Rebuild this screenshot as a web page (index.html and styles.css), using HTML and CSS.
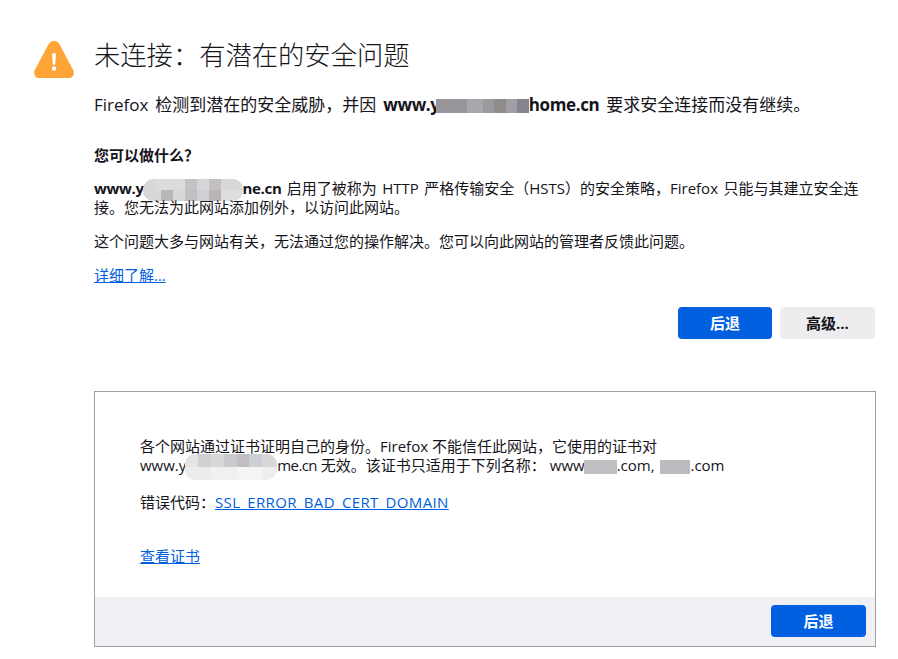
FILE: index.html
```html
<!DOCTYPE html>
<html lang="zh-CN">
<head>
<meta charset="utf-8">
<title>未连接：有潜在的安全问题</title>
<link rel="stylesheet" href="styles.css">
</head>
<body>
<main class="page">
  <svg class="warn" width="40" height="37" viewBox="0 0 40 37" aria-hidden="true">
    <path fill="#ffa436" d="M20 0c2.400 0 4.300 1.200 5.500 3.300l13.700 25.700c1.900 3.700-.5 8-4.700 8H5.500C1.300 37-1.100 32.700.8 29L14.500 3.300C15.700 1.200 17.600 0 20 0z"/>
    <path fill="#fff" d="M18 13.700c0-1.100.9-1.700 2-1.700s2 .6 2 1.700l-.8 9.400c0 .6-.5.900-1.200.9s-1.200-.3-1.200-.9z"/>
    <rect fill="#fff" x="18" y="25.500" width="4" height="4" rx="1"/>
  </svg>
  <div class="content">
    <h1 class="title">未连接：有潜在的安全问题</h1>
    <p class="intro">Firefox 检测到潜在的安全威胁，并因 <b class="host">www.y<span class="mask mask-intro"></span>home.cn</b> 要求安全连接而没有继续。</p>
    <h2 class="subtitle">您可以做什么？</h2>
    <p class="para"><b class="host">www.y<span class="mask mask-para"></span>ne.cn</b> 启用了被称为 HTTP 严格传输安全（HSTS）的安全策略，Firefox 只能与其建立安全连<br>接。您无法为此网站添加例外，以访问此网站。</p>
    <p class="para">这个问题大多与网站有关，无法通过您的操作解决。您可以向此网站的管理者反馈此问题。</p>
    <p class="para"><a class="link" href="#">详细了解…</a></p>
    <div class="actions">
      <button class="btn btn-primary btn-narrow" type="button">后退</button>
      <button class="btn btn-secondary" type="button">高级…</button>
    </div>
    <section class="panel">
      <div class="panel-body">
        <p class="cert-text">各个网站通过证书证明自己的身份。Firefox 不能信任此网站，它使用的证书对<br>www.y<span class="mask mask-cert"></span><span class="cert-tail">me.cn</span> 无效。该证书只适用于下列名称： www<span class="mask mask-a"></span>.com, <span class="mask mask-b"></span>.com</p>
        <p class="cert-code">错误代码：<a class="link code" href="#">SSL_ERROR_BAD_CERT_DOMAIN</a></p>
        <p class="cert-view"><a class="link" href="#">查看证书</a></p>
      </div>
      <div class="panel-footer">
        <button class="btn btn-primary" type="button">后退</button>
      </div>
    </section>
  </div>
</main>
</body>
</html>
```
FILE: styles.css
```css
html, body { margin: 0; padding: 0; background: #fff; }
body {
  font-family: "Open Sans", "Noto Sans CJK SC", sans-serif;
  font-size: 15px;
  line-height: 19px;
  color: #15141a;
}
.page {
  display: flex;
  align-items: flex-start;
  gap: 20px;
  padding: 41px 22px 0 34px;
  height: 618px;
  overflow: hidden;
}
.warn { flex: none; }
.content { flex: 1; min-width: 0; }
.title {
  margin: -3px 0 0;
  font-size: 26.3px;
  line-height: 34px;
  font-weight: 300;
}
.intro { margin: 22px 0 0; font-size: 17px; line-height: 22px; word-spacing: 2.5px; }
.host { letter-spacing: -.35px; }
.subtitle { margin: 30px 0 0; font-size: 15px; line-height: 19px; font-weight: 700; }
.para { margin: 15px 0 0; word-spacing: 1.5px; }
.subtitle + .para { margin-top: 14px; }
.link { color: #0060df; text-decoration: underline; }
.code { letter-spacing: .36px; }
.actions { display: flex; justify-content: flex-end; gap: 8px; margin: 22px 1px 0 0; }
.btn {
  width: 95px;
  height: 32px;
  border: 0;
  border-radius: 4px;
  padding: 0;
  font: 700 15px/19px "Open Sans", "Noto Sans CJK SC", sans-serif;
}
.btn-narrow { width: 94px; }
.btn-primary { background: #0060df; color: #fff; }
.btn-secondary { background: #ededf0; color: #15141a; }
.panel {
  width: 780px;
  height: 254px;
  margin-top: 52px;
  border: 1px solid #a0a0a0;
  display: flex;
  flex-direction: column;
}
.panel-body { flex: 1; padding: 45px 45px 0; }
.panel-footer {
  height: 49px;
  box-sizing: border-box;
  background: #f0f0f4;
  display: flex;
  justify-content: flex-end;
  padding: 8px 9px;
}
.cert-text { margin: 0; }
.cert-tail { letter-spacing: -.6px; }
.cert-code { margin: 18px 0 0; }
.cert-view { margin: 35px 0 0; }
.mask { display: inline-block; vertical-align: middle; }
.mask-intro {
  width: 93px; height: 14px; margin: -2px 0 -2px -4px;
  background: linear-gradient(90deg, #98969a 0 33%, #a8a8ac 33% 50%, #9c9a9e 50% 62%, #908c8a 62% 75%, #a0a0a4 75% 87%, #85858d 87%);
}
.mask-para {
  width: 100px; height: 22px; margin: -4px 0 -4px -1px; border-radius: 10px;
  background:
    linear-gradient(90deg, #d8d8da 0 12%, #dcdcdc 12% 42%, #c4c2c4 42% 54%, #d4d6da 54% 66%, #c4c0c0 66% 78%, #d8d8da 78%) top / 100% 50% no-repeat,
    linear-gradient(90deg, #d8d8da 0 18%, #b8b8b8 18% 30%, #d8d8d8 30% 42%, #c0c0c0 42% 54%, #d0d0d4 54% 66%, #b8b4b4 66% 78%, #dedede 78%) bottom / 100% 50% no-repeat;
}
.mask-cert {
  width: 92px; height: 26px; margin: -6px 0 -6px -1px; border-radius: 10px;
  background:
    linear-gradient(90deg, #e4e4e4 0 14%, #d0d0d0 14% 28%, #d8d8d8 28% 42%, #c8cace 42% 56%, #c0bec0 56% 70%, #ccd0d4 70% 84%, #d8d8d8 84%) top / 100% 50% no-repeat,
    linear-gradient(90deg, #ececec 0 28%, #f0f0f0 28% 56%, #f4f4f4 56% 84%, #eeeeee 84%) bottom / 100% 50% no-repeat;
}
.mask-a { width: 33px; height: 14px; margin: -2px 0 -2px -1px; background: #c0c0c4; }
.mask-b { width: 30px; height: 14px; margin: -2px 0 -2px 2px; background: #bcbcc0; }
```
